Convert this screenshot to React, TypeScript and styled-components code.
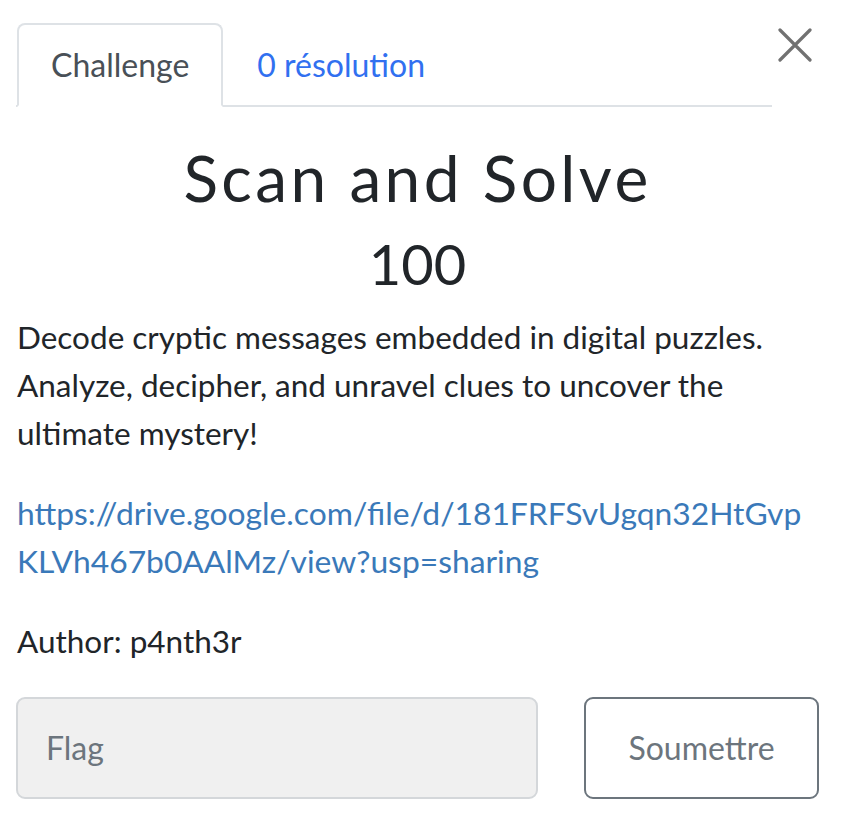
import React from "react";
import styled, { createGlobalStyle } from "styled-components";

const Global = createGlobalStyle`
  html, body { margin: 0; padding: 0; background: #ffffff; }
  body { font-family: Lato, "Open Sans", sans-serif; color: #212529; }
  * { box-sizing: border-box; }
`;

const Modal = styled.div`
  width: 842px;
  min-height: 814px;
  padding: 23px 23px 0 16px;
`;

const Header = styled.div`
  display: flex;
  align-items: flex-start;
`;

const Tabs = styled.nav`
  flex: 1;
  display: flex;
  border-bottom: 2px solid #dee2e6;
  padding-left: 1px;
`;

const Tab = styled.a<{ $active?: boolean }>`
  display: block;
  padding: 16px 32px;
  font-size: 32px;
  line-height: 48px;
  margin-bottom: -2px;
  border: 2px solid ${(p) => (p.$active ? "#dee2e6" : "transparent")};
  border-bottom-color: ${(p) => (p.$active ? "#ffffff" : "transparent")};
  border-radius: 8px 8px 0 0;
  color: ${(p) => (p.$active ? "#495057" : "#3170f0")};
  background: ${(p) => (p.$active ? "#ffffff" : "transparent")};
  text-decoration: none;
`;

const Close = styled.button`
  width: 47px;
  height: 48px;
  margin-top: 5px;
  border: none;
  background: transparent;
  padding: 0 0 0 6px;
  display: flex;
  align-items: flex-start;
  justify-content: flex-start;
  cursor: pointer;
`;

const Body = styled.div`
  padding-top: 33px;
`;

const Title = styled.h2`
  margin: 0 0 13px;
  text-align: center;
  font-weight: 400;
  font-size: 64px;
  line-height: 1.2;
  letter-spacing: 3.4px;
`;

const Value = styled.h3`
  margin: 0 0 16px;
  text-align: center;
  font-weight: 400;
  font-size: 56px;
  line-height: 1.2;
`;

const Text = styled.p<{ $size?: number }>`
  margin: 0 0 32px;
  padding-left: 1px;
  font-size: ${(p) => p.$size ?? 32}px;
  line-height: 48px;
`;

const Link = styled.a`
  color: #3a79b9;
  text-decoration: none;
  word-break: break-all;
`;

const SubmitRow = styled.div`
  display: grid;
  grid-template-columns: 522px 235px;
  column-gap: 46px;
  margin-top: 31px;
`;

const FlagInput = styled.input`
  height: 102px;
  padding: 0 28px;
  font-family: Lato, sans-serif;
  font-size: 32px;
  color: #495057;
  background: #f0f0f0;
  border: 2px solid #d4d7da;
  border-radius: 9px;
  outline: none;
  &::placeholder { color: #6c757d; }
`;

const SubmitButton = styled.button`
  height: 102px;
  font-family: Lato, sans-serif;
  font-size: 32px;
  color: #6c757d;
  background: #ffffff;
  border: 2px solid #6c757d;
  border-radius: 9px;
  cursor: pointer;
`;

export default function App() {
  return (
    <>
      <Global />
      <Modal>
        <Header>
          <Tabs>
            <Tab $active href="#">Challenge</Tab>
            <Tab href="#">0 résolution</Tab>
          </Tabs>
          <Close aria-label="Close">
            <svg width="34" height="34" viewBox="0 0 34 34">
              <path d="M2 2 L32 32 M32 2 L2 32" stroke="#717171" strokeWidth="3.2" strokeLinecap="round" />
            </svg>
          </Close>
        </Header>
        <Body>
          <Title>Scan and Solve</Title>
          <Value>100</Value>
          <Text $size={31.5}>
            Decode cryptic messages embedded in digital puzzles. Analyze, decipher, and unravel clues to uncover the ultimate mystery!
          </Text>
          <Text $size={31.8}>
            <Link href="#">https://drive.google.com/file/d/181FRFSvUgqn32HtGvpKLVh467b0AAlMz/view?usp=sharing</Link>
          </Text>
          <Text $size={31.5}>Author: p4nth3r</Text>
          <SubmitRow>
            <FlagInput placeholder="Flag" />
            <SubmitButton>Soumettre</SubmitButton>
          </SubmitRow>
        </Body>
      </Modal>
    </>
  );
}
